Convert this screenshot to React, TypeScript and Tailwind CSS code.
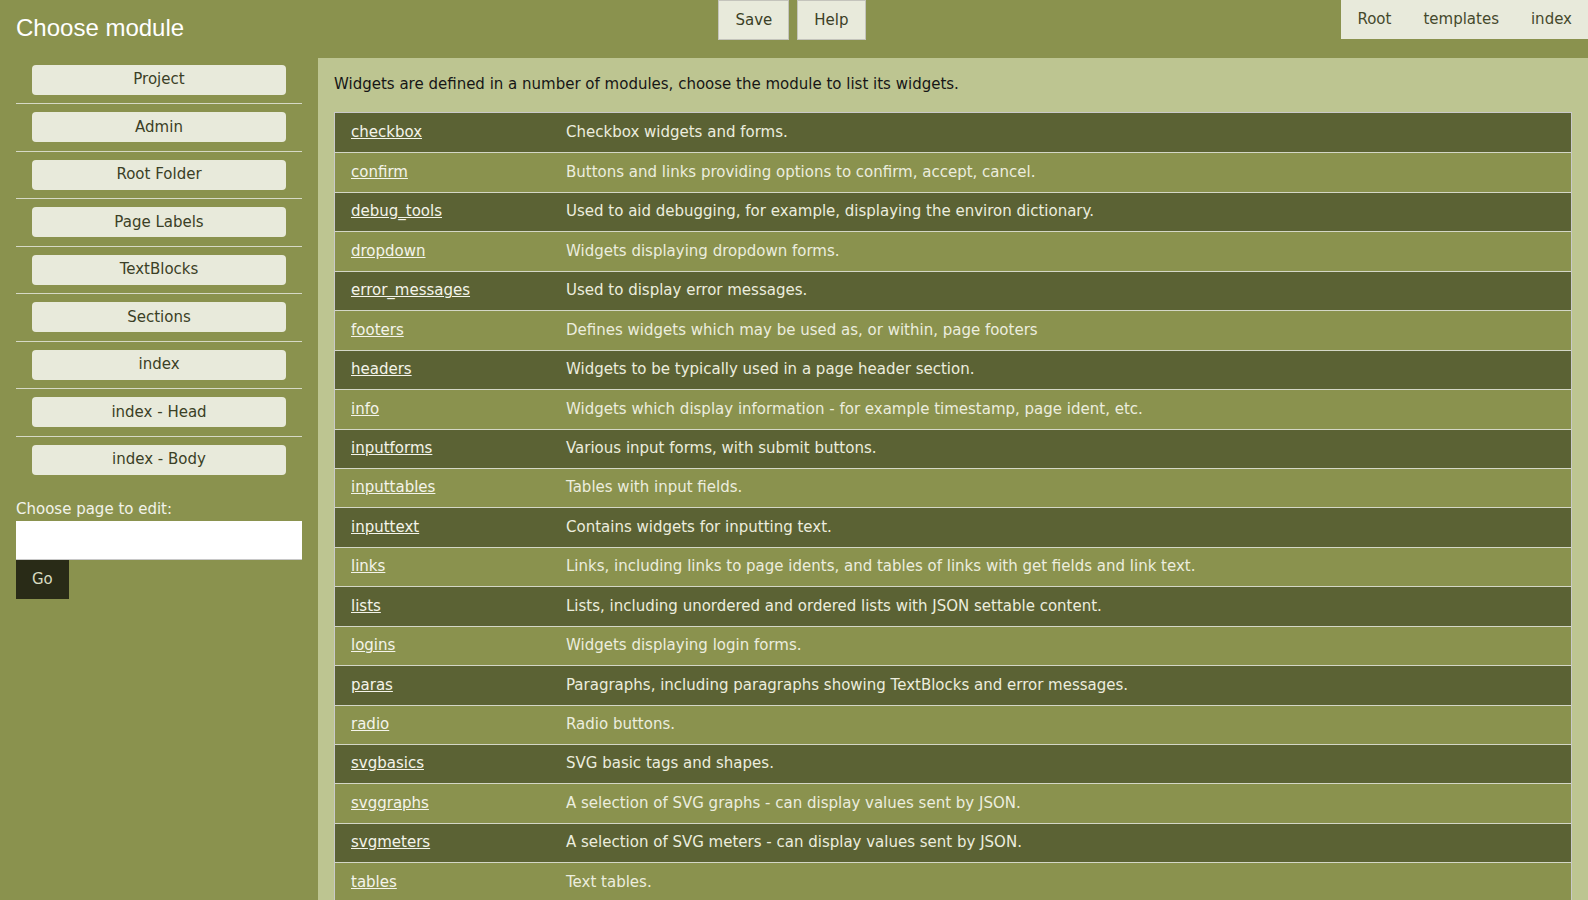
import React from "react";

const modules: [string, string][] = [
  ["checkbox", "Checkbox widgets and forms."],
  ["confirm", "Buttons and links providing options to confirm, accept, cancel."],
  ["debug_tools", "Used to aid debugging, for example, displaying the environ dictionary."],
  ["dropdown", "Widgets displaying dropdown forms."],
  ["error_messages", "Used to display error messages."],
  ["footers", "Defines widgets which may be used as, or within, page footers"],
  ["headers", "Widgets to be typically used in a page header section."],
  ["info", "Widgets which display information - for example timestamp, page ident, etc."],
  ["inputforms", "Various input forms, with submit buttons."],
  ["inputtables", "Tables with input fields."],
  ["inputtext", "Contains widgets for inputting text."],
  ["links", "Links, including links to page idents, and tables of links with get fields and link text."],
  ["lists", "Lists, including unordered and ordered lists with JSON settable content."],
  ["logins", "Widgets displaying login forms."],
  ["paras", "Paragraphs, including paragraphs showing TextBlocks and error messages."],
  ["radio", "Radio buttons."],
  ["svgbasics", "SVG basic tags and shapes."],
  ["svggraphs", "A selection of SVG graphs - can display values sent by JSON."],
  ["svgmeters", "A selection of SVG meters - can display values sent by JSON."],
  ["tables", "Text tables."],
];

const navItems = [
  "Project",
  "Admin",
  "Root Folder",
  "Page Labels",
  "TextBlocks",
  "Sections",
  "index",
  "index - Head",
  "index - Body",
];

export default function App() {
  return (
    <div
      className="min-h-screen bg-[#8a924e] text-[15px] leading-[17.5px]"
      style={{ fontFamily: '"DejaVu Sans", Verdana, sans-serif' }}
    >
      {/* Header */}
      <div className="grid h-[58px] grid-cols-[1fr_auto_1fr] items-start">
        <div className="pl-4 pt-[14px]">
          <h1
            className="text-[24px] leading-[28px] text-white"
            style={{ fontFamily: '"Liberation Sans", Arial, sans-serif' }}
          >
            Choose module
          </h1>
        </div>
        <div className="flex gap-[8px] pr-1">
          <button className="h-[40px] border border-[#c4c4bc] bg-[#e8eadb] px-4 pt-[1.5px] text-[#3b3f26]">
            Save
          </button>
          <button className="h-[40px] border border-[#c4c4bc] bg-[#e8eadb] px-4 pt-[1.5px] text-[#3b3f26]">
            Help
          </button>
        </div>
        <div className="flex justify-end">
          <nav className="flex h-[39px] items-center bg-[#e8eadb] text-[#45492c]">
            <span className="pl-4 pr-4">Root</span>
            <span className="px-4">templates</span>
            <span className="pl-4 pr-[16px]">index</span>
          </nav>
        </div>
      </div>

      {/* Body */}
      <div className="flex min-h-[842px]">
        <aside className="w-[318px] shrink-0 px-4">
          <div>
            {navItems.map((item, i) => (
              <div
                key={item}
                className={`${i === 0 ? "pt-[7px]" : "pt-[8px]"} ${
                  i === navItems.length - 1 ? "pb-[8.7px]" : "pb-[8.7px] border-b border-[#d6d9c6]"
                }`}
              >
                <button className="mx-4 block h-[29.8px] w-[254px] rounded-[4px] bg-[#e8eadb] text-center text-[#3b3f26]">
                  {item}
                </button>
              </div>
            ))}
          </div>
          <div className="mt-[18px] text-[#f2f3ea]">Choose page to edit:</div>
          <input
            type="text"
            className="mt-[2px] block h-[39px] w-[286px] border-b border-[#c8c8c8] bg-white outline-none"
          />
          <button className="block h-[39px] bg-[#292b17] px-4 text-[#d8dcc0]">Go</button>
        </aside>

        <main className="flex-1 bg-[#bdc591] pl-4 pr-[16px] pt-[18px]">
          <p className="text-[#161616]">
            Widgets are defined in a number of modules, choose the module to list its widgets.
          </p>
          <div className="mt-[18.5px] border border-[#c9c9c9]">
            {modules.map(([name, desc], i) => (
              <div
                key={name}
                className={`grid h-[39.45px] grid-cols-[231px_1fr] items-center ${
                  i > 0 ? "border-t border-[#d4d7c6]" : ""
                } ${i % 2 === 0 ? "bg-[#5b6234]" : "bg-[#8a924e]"}`}
              >
                <div className="pl-4">
                  <a href="#" className="text-[#f4f4ea] underline">
                    {name}
                  </a>
                </div>
                <div className="text-[#ecedde]">{desc}</div>
              </div>
            ))}
          </div>
        </main>
      </div>
    </div>
  );
}
